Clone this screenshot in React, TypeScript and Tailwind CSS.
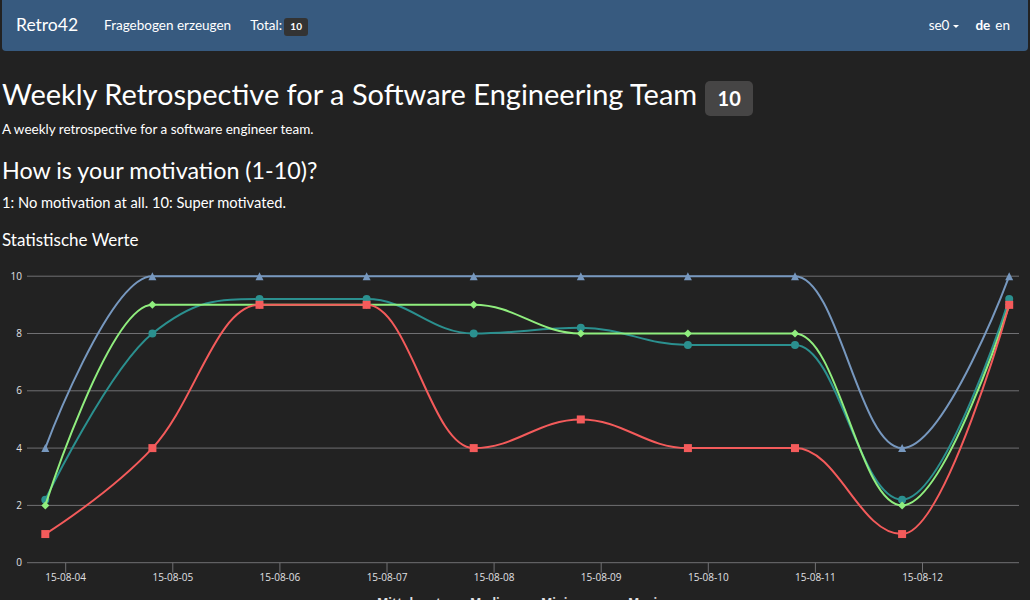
import React from 'react';

type Pt = { x: number; y: number };

const X0 = 45.3;
const DX = 107.1;
const yOf = (v: number) => 312.7 - 28.65 * v;

const SERIES = [
  { name: 'Mittelwert', color: '#2b908f', marker: 'circle', data: [2.2, 8, 9.2, 9.2, 8, 8.2, 7.6, 7.6, 2.2, 9.2] },
  { name: 'Median', color: '#90ee7e', marker: 'diamond', data: [2, 9, 9, 9, 9, 8, 8, 8, 2, 9] },
  { name: 'Minimum', color: '#f45b5b', marker: 'square', data: [1, 4, 9, 9, 4, 5, 4, 4, 1, 9] },
  { name: 'Maximum', color: '#7798BF', marker: 'triangle', data: [4, 10, 10, 10, 10, 10, 10, 10, 4, 10] },
];

const LEGEND_X = [377, 470, 541, 628];
const DAYS = ['15-08-04', '15-08-05', '15-08-06', '15-08-07', '15-08-08', '15-08-09', '15-08-10', '15-08-11', '15-08-12'];

// Highcharts-style spline: control points pulled toward neighbours, clamped so
// the curve never overshoots a local min or max.
function splinePath(pts: Pt[]) {
  const s = 1.5;
  const d = s + 1;
  let path = `M${pts[0].x},${pts[0].y}`;
  let prevRight: Pt | null = null;
  pts.forEach((p, i) => {
    if (i === 0) return;
    const last = pts[i - 1];
    const next = pts[i + 1];
    let left: Pt = p;
    let right: Pt | null = null;
    if (next) {
      const lx = (s * p.x + last.x) / d;
      let ly = (s * p.y + last.y) / d;
      const rx = (s * p.x + next.x) / d;
      let ry = (s * p.y + next.y) / d;
      const corr = ((ry - ly) * (rx - p.x)) / (rx - lx) + p.y - ry;
      ly += corr;
      ry += corr;
      if (ly > last.y && ly > p.y) {
        ly = Math.max(last.y, p.y);
        ry = 2 * p.y - ly;
      } else if (ly < last.y && ly < p.y) {
        ly = Math.min(last.y, p.y);
        ry = 2 * p.y - ly;
      }
      if (ry > next.y && ry > p.y) {
        ry = Math.max(next.y, p.y);
        ly = 2 * p.y - ry;
      } else if (ry < next.y && ry < p.y) {
        ry = Math.min(next.y, p.y);
        ly = 2 * p.y - ry;
      }
      left = { x: lx, y: ly };
      right = { x: rx, y: ry };
    }
    const c1 = prevRight ?? last;
    path += ` C${c1.x},${c1.y} ${left.x},${left.y} ${p.x},${p.y}`;
    prevRight = right;
  });
  return path;
}

function Marker({ kind, x, y, color }: { kind: string; x: number; y: number; color: string }) {
  if (kind === 'circle') return <circle cx={x} cy={y} r={4} fill={color} />;
  if (kind === 'square') return <rect x={x - 4} y={y - 4} width={8} height={8} fill={color} />;
  if (kind === 'diamond')
    return <polygon points={`${x},${y - 4} ${x + 4},${y} ${x},${y + 4} ${x - 4},${y}`} fill={color} />;
  return <polygon points={`${x},${y - 4} ${x + 4},${y + 4} ${x - 4},${y + 4}`} fill={color} />;
}

function Chart() {
  const chartFont = '"Open Sans", "DejaVu Sans", sans-serif';
  return (
    <svg width={1030} height={400} className="block">
      {[0, 2, 4, 6, 8, 10].map((v) => (
        <g key={v}>
          <line x1={27} x2={1019} y1={yOf(v)} y2={yOf(v)} stroke="#707073" strokeWidth={1} />
          <text x={22} y={yOf(v) + 3.5} textAnchor="end" fontSize={10} fill="#E0E0E3" fontFamily={chartFont}>
            {v}
          </text>
        </g>
      ))}
      {DAYS.map((d, k) => {
        const x = 65.7 + DX * k;
        return (
          <g key={d}>
            <line x1={x} x2={x} y1={yOf(0)} y2={yOf(0) + 10} stroke="#707073" strokeWidth={1} />
            <text x={x} y={331} textAnchor="middle" fontSize={10} fill="#E0E0E3" fontFamily={chartFont}>
              {d}
            </text>
          </g>
        );
      })}
      {SERIES.map((s) => {
        const pts = s.data.map((v, i) => ({ x: X0 + DX * i, y: yOf(v) }));
        return (
          <g key={s.name}>
            <path d={splinePath(pts)} fill="none" stroke={s.color} strokeWidth={2} />
            {pts.map((p, i) => (
              <Marker key={i} kind={s.marker} x={p.x} y={p.y} color={s.color} />
            ))}
          </g>
        );
      })}
      {/* Legend sits right at the fold; only the tops of the labels show. */}
      {SERIES.map((s, i) => (
        <g key={s.name}>
          <line x1={LEGEND_X[i] - 21} x2={LEGEND_X[i] - 5} y1={352} y2={352} stroke={s.color} strokeWidth={2} />
          <text x={LEGEND_X[i]} y={357} fontSize={12} fontWeight={700} fill="#E0E0E3" fontFamily={chartFont}>
            {s.name}
          </text>
        </g>
      ))}
    </svg>
  );
}

export default function App() {
  return (
    <div className="min-h-[600px] bg-[#222222] text-white" style={{ fontFamily: 'Lato, "Liberation Sans", sans-serif' }}>
      <nav className="mx-[2px] flex h-[51px] items-center justify-between rounded-b-[4px] bg-[#375a7f] pl-[14px] pr-[18px]">
        <div className="flex items-center">
          <span className="text-[17.5px]">Retro42</span>
          <span className="ml-[26px] text-[13.5px]">Fragebogen erzeugen</span>
          <span className="ml-[19px] text-[13.5px]">Total:</span>
          <span className="ml-[2px] mt-[2px] flex h-[18px] w-[24px] items-center justify-center rounded-[3px] bg-[#333333] text-[10px] font-bold">
            10
          </span>
        </div>
        <div className="flex items-center text-[13.5px]">
          <span>se0</span>
          <span className="ml-[4px] mt-[1px] h-0 w-0 border-x-[3px] border-t-[3px] border-x-transparent border-t-white" />
          <span className="ml-[16px] font-bold">de</span>
          <span className="ml-[5px]">en</span>
        </div>
      </nav>

      <main className="px-[2px]">
        <div className="mt-[25px] flex items-start">
          <h1 className="text-[29px] leading-[36px]">Weekly Retrospective for a Software Engineering Team</h1>
          <span className="ml-[8px] mt-[5px] flex h-[35px] w-[48px] items-center justify-center rounded-[5px] bg-[#464545] pb-[1px] text-[20px] font-bold">
            10
          </span>
        </div>
        <p className="mt-[4px] text-[13.5px] leading-[18px]">A weekly retrospective for a software engineer team.</p>
        <h2 className="mt-[18px] text-[23.3px] leading-[29px]">How is your motivation (1-10)?</h2>
        <p className="mt-[8px] text-[14.7px] leading-[18px]">1: No motivation at all. 10: Super motivated.</p>
        <h3 className="mt-[19px] text-[17px] leading-[20px]">Statistische Werte</h3>
      </main>

      <Chart />
    </div>
  );
}
